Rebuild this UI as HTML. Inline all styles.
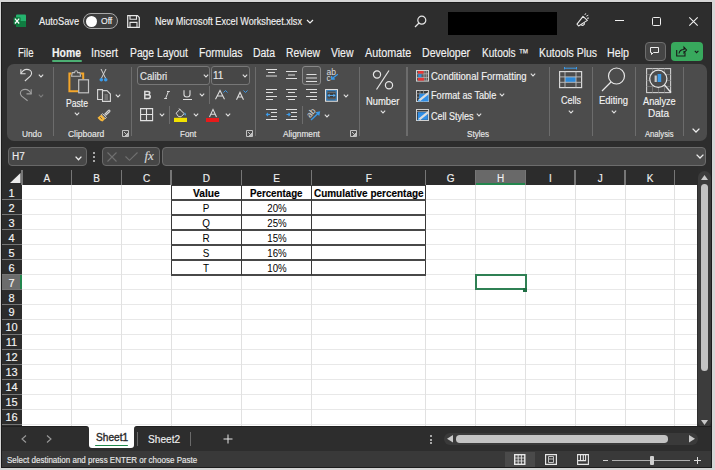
<!DOCTYPE html>
<html><head><meta charset="utf-8">
<style>
*{box-sizing:border-box}
html,body{margin:0;padding:0}
body{width:715px;height:470px;overflow:hidden;background:#d6d6d6;position:relative;font-family:"Liberation Sans",sans-serif}
.a{position:absolute}
.t{position:absolute;white-space:nowrap;line-height:1;transform-origin:0 0;color:#f2f2f2;-webkit-text-stroke:0.15px currentColor}
.k{-webkit-text-stroke:0}
svg{position:absolute;overflow:visible}
#win{position:absolute;left:1px;top:2px;width:711px;height:466px;background:#2d2d2d}
</style></head><body>
<div id="win"></div>

<!-- ===== TITLE BAR ===== -->
<svg style="left:13px;top:14px" width="14" height="14" viewBox="0 0 14 14">
  <rect x="3" y="0.6" width="10" height="12.5" rx="1" fill="#25b36e"/>
  <rect x="3" y="7" width="10" height="6.1" rx="0.5" fill="#107c41"/>
  <rect x="0.6" y="3.2" width="7" height="7.6" rx="0.8" fill="#0e7a3e"/>
  <path d="M1.9 4.6 L6.2 9.5 M6.2 4.6 L1.9 9.5" stroke="#fff" stroke-width="1.2"/>
</svg>
<div class="t" style="left:39px;top:16px;font-size:11px;transform:scaleX(0.84)">AutoSave</div>
<div class="a" style="left:83px;top:13px;width:34.5px;height:16px;border:1.6px solid #a8a8a8;border-radius:8px;background:#3d3d3d"></div>
<div class="a" style="left:86px;top:16px;width:11px;height:11px;border-radius:50%;background:#fff"></div>
<div class="t" style="left:101px;top:17px;font-size:9px;transform:scaleX(0.95)">Off</div>
<svg style="left:127px;top:15px" width="13" height="13" viewBox="0 0 13 13">
  <path d="M0.7 0.7 H10.5 L12.3 2.5 V12.3 H0.7 Z" fill="none" stroke="#e6e6e6" stroke-width="1.2"/>
  <path d="M3 0.7 V4.3 H9.5 V0.7" fill="none" stroke="#e6e6e6" stroke-width="1.1"/>
  <path d="M3 12.3 V7.4 H10 V12.3" fill="none" stroke="#e6e6e6" stroke-width="1.1"/>
</svg>
<div class="t" style="left:155px;top:16px;font-size:11px;transform:scaleX(0.83)">New Microsoft Excel Worksheet.xlsx</div>
<svg style="left:306px;top:19px" width="8" height="5" viewBox="0 0 8 5"><path d="M1 1 L4 4 L7 1" fill="none" stroke="#eee" stroke-width="1.2"/></svg>
<svg style="left:414px;top:15px" width="13" height="13" viewBox="0 0 13 13">
  <circle cx="7.8" cy="5.2" r="4" fill="none" stroke="#e6e6e6" stroke-width="1.2"/>
  <path d="M5 8 L1 12" stroke="#e6e6e6" stroke-width="1.3"/>
</svg>
<div class="a" style="left:448px;top:12px;width:109px;height:23px;background:#000"></div>
<svg style="left:574px;top:11px" width="17" height="17" viewBox="0 0 17 17">
  <path d="M3 13.2 L9 5.4 L13.4 9.4 L4.6 15 Z" fill="none" stroke="#e8e8e8" stroke-width="1.1" stroke-linejoin="round"/>
  <path d="M7.2 13.4 A1.7 1.7 0 0 0 10.2 11.8" fill="none" stroke="#e8e8e8" stroke-width="1.1"/>
  <path d="M10.8 4 L11.8 2.3 M12.3 5.2 L14.3 4.2 M13 7.3 L15 7" stroke="#e0e0e0" stroke-width="1"/>
</svg>
<div class="a" style="left:615px;top:20px;width:9px;height:1.2px;background:#f0f0f0"></div>
<div class="a" style="left:652px;top:17px;width:9px;height:9px;border:1.2px solid #f0f0f0;border-radius:1.5px"></div>
<svg style="left:689px;top:17px" width="9" height="9" viewBox="0 0 9 9"><path d="M0.3 0.3 L8.7 8.7 M8.7 0.3 L0.3 8.7" stroke="#f0f0f0" stroke-width="1.1"/></svg>

<!-- ===== TABS ===== -->
<div class="t" style="left:17.5px;top:47px;font-size:12px;transform:scaleX(0.8)">File</div>
<div class="t" style="left:52px;top:47px;font-size:12px;font-weight:bold;transform:scaleX(0.87)">Home</div>
<div class="a" style="left:52px;top:60px;width:30px;height:2px;background:#4caf73;border-radius:1px"></div>
<div class="t" style="left:91px;top:47px;font-size:12px;transform:scaleX(0.9)">Insert</div>
<div class="t" style="left:129.5px;top:47px;font-size:12px;transform:scaleX(0.86)">Page Layout</div>
<div class="t" style="left:198.5px;top:47px;font-size:12px;transform:scaleX(0.87)">Formulas</div>
<div class="t" style="left:252.5px;top:47px;font-size:12px;transform:scaleX(0.87)">Data</div>
<div class="t" style="left:286px;top:47px;font-size:12px;transform:scaleX(0.86)">Review</div>
<div class="t" style="left:331px;top:47px;font-size:12px;transform:scaleX(0.87)">View</div>
<div class="t" style="left:364.5px;top:47px;font-size:12px;transform:scaleX(0.9)">Automate</div>
<div class="t" style="left:422px;top:47px;font-size:12px;transform:scaleX(0.88)">Developer</div>
<div class="t" style="left:482px;top:47px;font-size:12px;transform:scaleX(0.84)">Kutools ™</div>
<div class="t" style="left:538.5px;top:47px;font-size:12px;transform:scaleX(0.87)">Kutools Plus</div>
<div class="t" style="left:607px;top:47px;font-size:12px;transform:scaleX(0.89)">Help</div>
<div class="a" style="left:645px;top:42px;width:21px;height:19px;background:#454545;border:1px solid #6e6e6e;border-radius:4px"></div>
<svg style="left:650px;top:47px" width="9" height="8" viewBox="0 0 9 8"><path d="M0.5 0.5 H8.5 V5.5 H3.5 L1.5 7.5 V5.5 H0.5 Z" fill="none" stroke="#eee" stroke-width="1"/></svg>
<div class="a" style="left:671px;top:42px;width:32px;height:19px;background:#38a95d;border-radius:4px"></div>
<svg style="left:676px;top:46px" width="24" height="11" viewBox="0 0 24 11">
  <path d="M0.7 4 V10 H9 V6.5" fill="none" stroke="#1a1a1a" stroke-width="1.1"/>
  <path d="M3 7.5 C3.5 4.5 5.5 3.5 8 3.5 V1.2 L10.5 4 L8 6.8 V5" fill="none" stroke="#1a1a1a" stroke-width="1.1"/>
  <path d="M18.8 4.8 L20.6 6.6 L22.4 4.8" fill="none" stroke="#1a1a1a" stroke-width="1.1"/>
</svg>

<!-- ===== RIBBON PANEL ===== -->
<div class="a" style="left:7px;top:64px;width:700px;height:76.5px;background:#4c4c4c;border-radius:7px"></div>


<!-- Undo group -->
<svg style="left:19px;top:68px" width="16" height="14" viewBox="0 0 16 14">
  <path d="M1.9 1.2 V5.8 H6.6" fill="none" stroke="#dcdcdc" stroke-width="1.1"/>
  <path d="M1.9 5.8 C3.5 2.5 6 1.4 7.7 1.4 C10.5 1.4 12.6 3.2 12.6 5.2 C12.6 6.5 12 7.3 11.3 8.2 L5.9 13" fill="none" stroke="#dcdcdc" stroke-width="1.1"/>
</svg>
<svg style="left:38px;top:74px" width="6" height="4" viewBox="0 0 6 4"><path d="M0.8 0.7 L3 2.9 L5.2 0.7" fill="none" stroke="#e0e0e0" stroke-width="1.1"/></svg>
<svg style="left:19px;top:88px" width="16" height="14" viewBox="0 0 16 14">
  <path d="M12.2 1.2 V5.9 H7.5" fill="none" stroke="#a0a0a0" stroke-width="1.1"/>
  <path d="M12.2 5.9 C10.6 2.6 8.1 1.4 6.3 1.4 C3.5 1.4 1.4 3.2 1.4 5.2 C1.4 6.5 2 7.3 2.7 8.2 L8.6 12.8" fill="none" stroke="#a0a0a0" stroke-width="1.1"/>
</svg>
<svg style="left:38px;top:94px" width="6" height="4" viewBox="0 0 6 4"><path d="M0.8 0.7 L3 2.9 L5.2 0.7" fill="none" stroke="#7c7c7c" stroke-width="1.1"/></svg>
<div class="t" style="left:22px;top:129.5px;font-size:9px;color:#e8e8e8;transform:scaleX(0.92)">Undo</div>
<div class="a" style="left:52.75px;top:67px;width:1.5px;height:69px;background:#6c6c6c"></div>

<!-- Clipboard group -->
<svg style="left:67px;top:69px" width="23" height="25" viewBox="0 0 23 25">
  <path d="M4.5 4.4 H2.4 V22.2 H11" fill="none" stroke="#f4a62a" stroke-width="2"/>
  <path d="M13.5 4.4 H16.2 V10" fill="none" stroke="#f4a62a" stroke-width="2"/>
  <path d="M4.6 7.2 L5.3 3.6 H7.6 C7.8 1.2 10.4 1.2 10.6 3.6 H12.9 L13.6 7.2 Z" fill="#4c4c4c" stroke="#bdbdbd" stroke-width="1.1"/>
  <rect x="11.7" y="10.8" width="9.8" height="13" fill="#4c4c4c" stroke="#c4c4c4" stroke-width="1.2"/>
</svg>
<div class="t" style="left:66px;top:99px;font-size:10px;transform:scaleX(0.86)">Paste</div>
<svg style="left:74px;top:112px" width="6" height="4" viewBox="0 0 6 4"><path d="M0.8 0.7 L3 2.9 L5.2 0.7" fill="none" stroke="#e0e0e0" stroke-width="1.1"/></svg>
<svg style="left:98px;top:68px" width="11" height="14" viewBox="0 0 11 14">
  <path d="M3 1 L7.6 10.3 M8 1 L3.4 10.3" stroke="#d6d6d6" stroke-width="1"/>
  <circle cx="3.3" cy="11.8" r="1.8" fill="#3b9ae8"/>
  <circle cx="7.7" cy="11.8" r="1.8" fill="#3b9ae8"/>
</svg>
<svg style="left:96.5px;top:89px" width="14" height="13" viewBox="0 0 14 13">
  <path d="M0.6 0.6 H5.5 V10.5 H0.6 Z" fill="none" stroke="#d6d6d6" stroke-width="1.1"/>
  <path d="M5.5 1.6 H10 L13.4 5 V12.4 H5.5 Z" fill="#4c4c4c" stroke="#d6d6d6" stroke-width="1.1"/>
  <path d="M7.5 6 H11 M7.5 8 H11 M7.5 10 H11" stroke="#9a9a9a" stroke-width="1"/>
</svg>
<svg style="left:115px;top:94px" width="6" height="4" viewBox="0 0 6 4"><path d="M0.8 0.7 L3 2.9 L5.2 0.7" fill="none" stroke="#e0e0e0" stroke-width="1.1"/></svg>
<svg style="left:97px;top:108.5px" width="14" height="13" viewBox="0 0 14 13">
  <path d="M7.5 5.5 L11.5 1.3 C12.3 0.5 13.5 1.7 12.7 2.5 L8.5 6.5" fill="none" stroke="#d6d6d6" stroke-width="1.1"/>
  <path d="M5.5 4.6 L9.4 8.5 L8.2 9.7 L4.3 5.8 Z" fill="#4c4c4c" stroke="#d6d6d6" stroke-width="1"/>
  <path d="M4.3 5.8 L0.5 8.8 C2 10.8 3.5 12 5.5 12.5 L8.2 9.7 Z" fill="#f6b73c"/>
  <path d="M3 8 L5.2 10.2" stroke="#474747" stroke-width="0.7"/>
</svg>
<div class="t" style="left:67.5px;top:129.5px;font-size:9px;color:#e8e8e8;transform:scaleX(0.94)">Clipboard</div>
<svg style="left:122px;top:130px" width="7" height="7" viewBox="0 0 7 7"><path d="M0.5 6.5 V0.5 H6.5 V6.5 Z M2 2 L5.5 5.5 M5.5 3 V5.5 H3" fill="none" stroke="#cfcfcf" stroke-width="0.9"/></svg>
<div class="a" style="left:130.75px;top:67px;width:1.5px;height:69px;background:#6c6c6c"></div>

<!-- Font group -->
<div class="a" style="left:137px;top:66px;width:73px;height:19px;border:1px solid #777;border-radius:3px;background:#474747"></div>
<div class="t" style="left:139.5px;top:72px;font-size:10px;color:#e8e8e8;transform:scaleX(0.96)">Calibri</div>
<svg style="left:202.5px;top:74px" width="6" height="4" viewBox="0 0 6 4"><path d="M0.8 0.7 L3 2.9 L5.2 0.7" fill="none" stroke="#e0e0e0" stroke-width="1.1"/></svg>
<div class="a" style="left:211px;top:66px;width:39px;height:19px;border:1px solid #777;border-radius:3px;background:#474747"></div>
<div class="t" style="left:213px;top:71px;font-size:10px;color:#e8e8e8">11</div>
<svg style="left:242px;top:74px" width="6" height="4" viewBox="0 0 6 4"><path d="M0.8 0.7 L3 2.9 L5.2 0.7" fill="none" stroke="#e0e0e0" stroke-width="1.1"/></svg>
<svg style="left:144px;top:90.5px" width="7" height="8" viewBox="0 0 7 8"><path d="M0.8 0.5 H3.8 C5.3 0.5 5.8 1.3 5.8 2.1 C5.8 3 5.2 3.6 4 3.8 C5.5 3.9 6.3 4.7 6.3 5.7 C6.3 6.9 5.4 7.5 4 7.5 H0.8 Z M0.8 3.8 H4" fill="none" stroke="#dcdcdc" stroke-width="1.5"/></svg>
<svg style="left:164px;top:90.5px" width="6" height="8" viewBox="0 0 6 8"><path d="M3 0.5 H5.8 M0.2 7.5 H3 M4.4 0.5 L1.6 7.5" fill="none" stroke="#dcdcdc" stroke-width="1"/></svg>
<svg style="left:183px;top:90px" width="8" height="8" viewBox="0 0 8 8"><path d="M1 0.3 V4.5 C1 6 2 7 4 7 C6 7 7 6 7 4.5 V0.3" fill="none" stroke="#dcdcdc" stroke-width="1.1"/></svg>
<div class="a" style="left:182.5px;top:99px;width:9px;height:1px;background:#dcdcdc"></div>
<svg style="left:199px;top:93px" width="6" height="4" viewBox="0 0 6 4"><path d="M0.8 0.7 L3 2.9 L5.2 0.7" fill="none" stroke="#e0e0e0" stroke-width="1.1"/></svg>
<div class="a" style="left:209px;top:86px;width:1.3px;height:18px;background:#6c6c6c"></div>
<svg style="left:214.5px;top:90px" width="10" height="9.5" viewBox="0 0 10 9.5"><path d="M0.5 9.3 L5 0.4 L9.5 9.3 M2.2 6 H7.8" fill="none" stroke="#dcdcdc" stroke-width="1.1"/></svg>
<svg style="left:222.5px;top:89.5px" width="5" height="3" viewBox="0 0 5 3"><path d="M0.5 2.5 L2.5 0.5 L4.5 2.5" fill="none" stroke="#3b9ae8" stroke-width="1"/></svg>
<svg style="left:235.5px;top:91.5px" width="8" height="8" viewBox="0 0 8 8"><path d="M0.5 7.8 L4 0.4 L7.5 7.8 M1.8 5 H6.2" fill="none" stroke="#dcdcdc" stroke-width="1.1"/></svg>
<svg style="left:242.5px;top:89.5px" width="5" height="3" viewBox="0 0 5 3"><path d="M0.5 0.5 L2.5 2.5 L4.5 0.5" fill="none" stroke="#3b9ae8" stroke-width="1"/></svg>
<svg style="left:140px;top:108px" width="14" height="14" viewBox="0 0 14 14"><path d="M0.6 0.6 H12.6 V12.6 H0.6 Z M6.5 0.6 V12.6 M0.6 6.5 H12.6" fill="none" stroke="#e2e2e2" stroke-width="1.1"/></svg>
<svg style="left:159px;top:113px" width="6" height="4" viewBox="0 0 6 4"><path d="M0.8 0.7 L3 2.9 L5.2 0.7" fill="none" stroke="#e0e0e0" stroke-width="1.1"/></svg>
<div class="a" style="left:169px;top:106px;width:1.3px;height:18px;background:#6c6c6c"></div>
<svg style="left:174px;top:108px" width="14" height="14" viewBox="0 0 14 14">
  <path d="M2.2 5.2 L5.8 1.4 L10.2 5.6 L7 8.8 L4.5 8.6 Z" fill="none" stroke="#dcdcdc" stroke-width="1"/>
  <path d="M5 0.5 L6.3 2" stroke="#dcdcdc" stroke-width="1"/>
  <path d="M10.8 4.2 C11.8 5.5 12.3 6.8 11.4 7.5 C10.5 7.6 10.2 6.6 10.8 4.2Z" fill="#4aa8f0"/>
  <rect x="0" y="9.8" width="13" height="4.2" fill="#f2e200"/>
</svg>
<svg style="left:193px;top:113px" width="6" height="4" viewBox="0 0 6 4"><path d="M0.8 0.7 L3 2.9 L5.2 0.7" fill="none" stroke="#e0e0e0" stroke-width="1.1"/></svg>
<svg style="left:208.8px;top:108.8px" width="8" height="8.2" viewBox="0 0 8 8.2"><path d="M0.5 8.1 L4 0.4 L7.5 8.1 M1.8 5.2 H6.2" fill="none" stroke="#dcdcdc" stroke-width="1.05"/></svg>
<div class="a" style="left:206px;top:118px;width:13px;height:3.5px;background:#e81a1a"></div>
<svg style="left:225px;top:113px" width="6" height="4" viewBox="0 0 6 4"><path d="M0.8 0.7 L3 2.9 L5.2 0.7" fill="none" stroke="#e0e0e0" stroke-width="1.1"/></svg>
<div class="t" style="left:179.5px;top:129.5px;font-size:9px;color:#e8e8e8;transform:scaleX(0.9)">Font</div>
<svg style="left:246px;top:130px" width="7" height="7" viewBox="0 0 7 7"><path d="M0.5 6.5 V0.5 H6.5 V6.5 Z M2 2 L5.5 5.5 M5.5 3 V5.5 H3" fill="none" stroke="#cfcfcf" stroke-width="0.9"/></svg>
<div class="a" style="left:254.75px;top:67px;width:1.5px;height:69px;background:#6c6c6c"></div>

<!-- Alignment group -->
<svg style="left:266px;top:69px" width="11" height="10" viewBox="0 0 11 10"><path d="M0 0.5 H11 M2 3.5 H9 M0 7 H11" stroke="#dedede" stroke-width="1"/></svg>
<svg style="left:286px;top:70.5px" width="11" height="10" viewBox="0 0 11 10"><path d="M0 0.5 H11 M2 4 H9 M0 7.5 H11" stroke="#dedede" stroke-width="1"/></svg>
<div class="a" style="left:302px;top:66px;width:18.5px;height:18.5px;border:1px solid #888;border-radius:3px;background:#525252"></div>
<svg style="left:305.5px;top:74px" width="11" height="10" viewBox="0 0 11 10"><path d="M0.5 0.5 H10.5 M0 4 H11 M0 7.5 H11" stroke="#dedede" stroke-width="1"/></svg>
<svg style="left:326px;top:68px" width="14" height="15" viewBox="0 0 14 15">
  <text x="0.6" y="7" font-size="8.5" fill="#dcdcdc" font-family="Liberation Sans">ab</text>
  <text x="0.6" y="13" font-size="8.5" fill="#dcdcdc" font-family="Liberation Sans">c</text>
  <path d="M11.8 6.3 L6.2 10.6 M5.6 8 V11 H8.8" fill="none" stroke="#3b9ae8" stroke-width="1.3"/>
</svg>
<svg style="left:266px;top:89px" width="11" height="11" viewBox="0 0 11 11"><path d="M0 0.5 H11 M0 3.5 H7 M0 7.5 H11 M0 10.5 H7" stroke="#dedede" stroke-width="1"/></svg>
<svg style="left:286px;top:89px" width="11" height="11" viewBox="0 0 11 11"><path d="M0 0.5 H11 M2 3.5 H9 M0 7.5 H11 M2 10.5 H9" stroke="#dedede" stroke-width="1"/></svg>
<svg style="left:306px;top:89px" width="11" height="11" viewBox="0 0 11 11"><path d="M0 0.5 H11 M4 3.5 H11 M0 7.5 H11 M4 10.5 H11" stroke="#dedede" stroke-width="1"/></svg>
<svg style="left:324.5px;top:88.5px" width="13" height="13" viewBox="0 0 13 13">
  <rect x="0.6" y="0.6" width="11.8" height="11.6" fill="#3a3a3a" stroke="#e6e6e6" stroke-width="1.1"/>
  <rect x="1.8" y="1.8" width="9.4" height="9.2" fill="none" stroke="#3b9ae8" stroke-width="1"/>
  <path d="M2.3 3.6 H10.7 M2.3 9.2 H10.7" stroke="#777" stroke-width="0.8"/>
  <path d="M4 6.4 H9" stroke="#5ab0f5" stroke-width="1"/>
  <path d="M2.4 6.4 L4.6 4.6 V8.2 Z M10.6 6.4 L8.4 4.6 V8.2 Z" fill="#5ab0f5"/>
</svg>
<svg style="left:342.8px;top:93.5px" width="6" height="4" viewBox="0 0 6 4"><path d="M0.8 0.7 L3 2.9 L5.2 0.7" fill="none" stroke="#e0e0e0" stroke-width="1.1"/></svg>
<svg style="left:266px;top:109px" width="11" height="11" viewBox="0 0 11 11"><path d="M0 0.5 H11 M5 3.5 H11 M5 7.5 H11 M0 10.5 H11" stroke="#dedede" stroke-width="1"/><path d="M4 5.5 H0.5 M2 4 L0.5 5.5 L2 7" fill="none" stroke="#3b9ae8" stroke-width="1.1"/></svg>
<svg style="left:286px;top:109px" width="11" height="11" viewBox="0 0 11 11"><path d="M0 0.5 H11 M5 3.5 H11 M5 7.5 H11 M0 10.5 H11" stroke="#dedede" stroke-width="1"/><path d="M0.5 5.5 H4 M2.5 4 L4 5.5 L2.5 7" fill="none" stroke="#3b9ae8" stroke-width="1.1"/></svg>
<div class="a" style="left:302px;top:106px;width:1.3px;height:18px;background:#6c6c6c"></div>
<svg style="left:305px;top:106px" width="18" height="16" viewBox="0 0 18 16">
  <text x="6.2" y="9.6" font-size="8.5" fill="#dcdcdc" font-family="Liberation Sans" text-anchor="middle" transform="rotate(-48 6.2 7)">ab</text>
  <path d="M6 14 L13.2 7.3" stroke="#3b9ae8" stroke-width="1.3"/>
  <path d="M15.2 5.2 L10.4 6.2 L14.2 10 Z" fill="#3b9ae8"/>
</svg>
<svg style="left:323.5px;top:113.5px" width="6" height="4" viewBox="0 0 6 4"><path d="M0.8 0.7 L3 2.9 L5.2 0.7" fill="none" stroke="#e0e0e0" stroke-width="1.1"/></svg>
<div class="t" style="left:282.5px;top:129.5px;font-size:9px;color:#e8e8e8;transform:scaleX(0.92)">Alignment</div>
<svg style="left:350px;top:130px" width="7" height="7" viewBox="0 0 7 7"><path d="M0.5 6.5 V0.5 H6.5 V6.5 Z M2 2 L5.5 5.5 M5.5 3 V5.5 H3" fill="none" stroke="#cfcfcf" stroke-width="0.9"/></svg>
<div class="a" style="left:358.75px;top:67px;width:1.5px;height:69px;background:#6c6c6c"></div>

<!-- Number group -->
<svg style="left:372px;top:70px" width="22" height="20" viewBox="0 0 22 20">
  <circle cx="5" cy="4.5" r="3.6" fill="none" stroke="#e6e6e6" stroke-width="1.2"/>
  <circle cx="17" cy="15.3" r="3.6" fill="none" stroke="#e6e6e6" stroke-width="1.2"/>
  <path d="M17 0.5 L4.5 19.5" stroke="#e6e6e6" stroke-width="1.2"/>
</svg>
<div class="t" style="left:365.5px;top:96.5px;font-size:10px;transform:scaleX(0.94)">Number</div>
<svg style="left:379.5px;top:110px" width="6" height="4" viewBox="0 0 6 4"><path d="M0.8 0.7 L3 2.9 L5.2 0.7" fill="none" stroke="#e0e0e0" stroke-width="1.1"/></svg>
<div class="a" style="left:406.25px;top:67px;width:1.5px;height:69px;background:#6c6c6c"></div>

<!-- Styles group -->
<svg style="left:416px;top:69.5px" width="13" height="12" viewBox="0 0 13 12">
  <rect x="0" y="0" width="13" height="11.6" fill="#d0d0d0"/>
  <rect x="1" y="1" width="11" height="9.6" fill="#5a5a5a"/>
  <path d="M1 3.8 H12 M1 7.5 H12 M8 1 V10.6 M10.3 1 V10.6" stroke="#b8b8b8" stroke-width="0.7"/>
  <rect x="2" y="1" width="5.6" height="2.6" fill="#e83535"/>
  <rect x="2.3" y="4.2" width="3.2" height="3" fill="#2b8fe0"/>
  <rect x="2" y="7.9" width="6" height="2.7" fill="#e83535"/>
</svg>
<div class="t" style="left:431px;top:72.4px;font-size:10px;transform:scaleX(0.95)">Conditional Formatting</div>
<svg style="left:530px;top:73px" width="6" height="4" viewBox="0 0 6 4"><path d="M0.8 0.7 L3 2.9 L5.2 0.7" fill="none" stroke="#e0e0e0" stroke-width="1.1"/></svg>
<svg style="left:416px;top:89.5px" width="13" height="12" viewBox="0 0 13 12">
  <rect x="0.5" y="0.5" width="12" height="11" fill="#3a3a3a" stroke="#cfcfcf" stroke-width="1"/>
  <path d="M0.5 3.8 H12.5 M0.5 7.2 H12.5 M4 0.5 V11.5 M7.5 0.5 V11.5" stroke="#9a9a9a" stroke-width="0.8"/>
  <path d="M3.5 3.8 H12.5 V11.5 H2.5 Z" fill="#2f8ee6"/>
  <path d="M3 10.6 L12.3 3.2" stroke="#dcdcdc" stroke-width="2.2"/>
  <path d="M1.5 11.8 L2.3 9.5 L4.2 10.6 Z" fill="#57aef5"/>
</svg>
<div class="t" style="left:431px;top:91.3px;font-size:10px;transform:scaleX(0.912)">Format as Table</div>
<svg style="left:499px;top:93px" width="6" height="4" viewBox="0 0 6 4"><path d="M0.8 0.7 L3 2.9 L5.2 0.7" fill="none" stroke="#e0e0e0" stroke-width="1.1"/></svg>
<svg style="left:416px;top:109px" width="13" height="12" viewBox="0 0 13 12">
  <rect x="0.5" y="0.5" width="12" height="11" fill="#3a3a3a" stroke="#cfcfcf" stroke-width="1"/>
  <path d="M1 2.5 H12" stroke="#9a9a9a" stroke-width="0.8"/>
  <path d="M1.8 3.2 H11.8 V10.8 H1.8 Z" fill="#2f8ee6"/>
  <path d="M3 10.6 L12.3 3.2" stroke="#dcdcdc" stroke-width="2.2"/>
  <path d="M1.5 11.8 L2.3 9.5 L4.2 10.6 Z" fill="#57aef5"/>
</svg>
<div class="t" style="left:431px;top:112px;font-size:10px;transform:scaleX(0.9)">Cell Styles</div>
<svg style="left:476px;top:113px" width="6" height="4" viewBox="0 0 6 4"><path d="M0.8 0.7 L3 2.9 L5.2 0.7" fill="none" stroke="#e0e0e0" stroke-width="1.1"/></svg>
<div class="t" style="left:467px;top:129.5px;font-size:9px;color:#e8e8e8;transform:scaleX(0.9)">Styles</div>
<div class="a" style="left:548.75px;top:67px;width:1.5px;height:69px;background:#6c6c6c"></div>

<!-- Cells -->
<svg style="left:559px;top:67px" width="24" height="22" viewBox="0 0 24 22">
  <path d="M5.5 1.2 H17.5 M5.5 0 V2.4 M17.5 0 V2.4" stroke="#3b9ae8" stroke-width="1"/>
  <rect x="6" y="9.9" width="11" height="5.4" fill="#2b88d8"/>
  <rect x="0.6" y="4.6" width="22" height="16" fill="none" stroke="#d8d8d8" stroke-width="1.2"/>
  <path d="M0.6 9.9 H22.6 M0.6 15.3 H22.6 M6 4.6 V20.6 M17 4.6 V20.6" stroke="#bdbdbd" stroke-width="0.9"/>
</svg>
<div class="t" style="left:560.5px;top:95.7px;font-size:10px;transform:scaleX(0.9)">Cells</div>
<svg style="left:567.5px;top:109.5px" width="6" height="4" viewBox="0 0 6 4"><path d="M0.8 0.7 L3 2.9 L5.2 0.7" fill="none" stroke="#e0e0e0" stroke-width="1.1"/></svg>
<div class="a" style="left:591.75px;top:67px;width:1.5px;height:69px;background:#6c6c6c"></div>

<!-- Editing -->
<svg style="left:601px;top:67px" width="25" height="25" viewBox="0 0 25 25">
  <circle cx="15.5" cy="9" r="8" fill="none" stroke="#e6e6e6" stroke-width="1.2"/>
  <path d="M10 15 L1 24" stroke="#e6e6e6" stroke-width="1.3"/>
</svg>
<div class="t" style="left:598.5px;top:95.7px;font-size:10px;transform:scaleX(0.95)">Editing</div>
<svg style="left:610.5px;top:109.5px" width="6" height="4" viewBox="0 0 6 4"><path d="M0.8 0.7 L3 2.9 L5.2 0.7" fill="none" stroke="#e0e0e0" stroke-width="1.1"/></svg>
<div class="a" style="left:634.75px;top:67px;width:1.5px;height:69px;background:#6c6c6c"></div>

<!-- Analyze Data -->
<svg style="left:646px;top:68px" width="26" height="26" viewBox="0 0 26 26">
  <rect x="0.6" y="0.6" width="24" height="24" fill="none" stroke="#cfcfcf" stroke-width="1.1"/>
  <path d="M0.6 6.5 H24.6 M0.6 12.5 H24.6 M0.6 18.5 H24.6 M6.5 0.6 V24.6 M12.5 0.6 V24.6 M18.5 0.6 V24.6" stroke="#7a7a7a" stroke-width="0.8"/>
  <circle cx="12.3" cy="10.8" r="8.6" fill="#4c4c4c" stroke="#e6e6e6" stroke-width="1.2"/>
  <rect x="8.6" y="7.5" width="2.2" height="6.5" fill="#c8c8c8"/>
  <rect x="11.6" y="6" width="3.6" height="8" fill="#3b9ae8"/>
  <path d="M18.5 17 L25 24.5" stroke="#e6e6e6" stroke-width="1.3"/>
</svg>
<div class="t" style="left:642.5px;top:97px;font-size:10px;transform:scaleX(0.92)">Analyze</div>
<div class="t" style="left:648px;top:109px;font-size:10px;transform:scaleX(1.0)">Data</div>
<div class="t" style="left:645px;top:129.5px;font-size:9px;color:#e8e8e8;transform:scaleX(0.85)">Analysis</div>
<div class="a" style="left:682.75px;top:67px;width:1.5px;height:69px;background:#6c6c6c"></div>
<svg style="left:691.5px;top:127.5px" width="8" height="5" viewBox="0 0 8 5"><path d="M0.6 0.6 L4 4 L7.4 0.6" fill="none" stroke="#eee" stroke-width="1.3"/></svg>


<!-- ===== FORMULA BAR ===== -->
<div class="a" style="left:7.5px;top:147px;width:79.5px;height:19px;border:1px solid #686868;border-radius:4px;background:#474747"></div>
<div class="t" style="left:12px;top:151.5px;font-size:10px;color:#ececec">H7</div>
<svg style="left:75px;top:155.5px" width="7" height="5" viewBox="0 0 7 5"><path d="M0.6 0.6 L3.5 3.8 L6.4 0.6" fill="none" stroke="#eee" stroke-width="1.3"/></svg>
<div class="a" style="left:93.3px;top:151.5px;width:2px;height:2px;background:#cfcfcf;border-radius:1px"></div>
<div class="a" style="left:93.3px;top:155.5px;width:2px;height:2px;background:#cfcfcf;border-radius:1px"></div>
<div class="a" style="left:93.3px;top:159.5px;width:2px;height:2px;background:#cfcfcf;border-radius:1px"></div>
<div class="a" style="left:102px;top:147px;width:57.5px;height:19px;border:1px solid #6a6a6a;border-radius:4px;background:#464646"></div>
<svg style="left:107px;top:151.5px" width="10" height="10" viewBox="0 0 10 10"><path d="M0.5 0.5 L9.5 9.5 M9.5 0.5 L0.5 9.5" stroke="#707070" stroke-width="1.1"/></svg>
<svg style="left:124.5px;top:152px" width="13" height="9" viewBox="0 0 13 9"><path d="M0.5 4.5 L4.5 8.3 L12.5 0.5" fill="none" stroke="#707070" stroke-width="1.1"/></svg>
<div class="t" style="left:144.5px;top:149px;font-size:13px;font-style:italic;color:#d8d8d8;font-family:'Liberation Serif'">fx</div>
<div class="a" style="left:162px;top:147px;width:544px;height:19px;border:1px solid #6c6c6c;border-radius:4px;background:#4c4c4c"></div>
<svg style="left:696px;top:154px" width="8" height="5" viewBox="0 0 8 5"><path d="M0.6 0.6 L4 4 L7.4 0.6" fill="none" stroke="#eee" stroke-width="1.3"/></svg>

<div class="a" style="left:22px;top:185px;width:674.5px;height:241px;background:#fff;overflow:hidden">
<div class="a" style="left:0;top:14px;width:680px;height:1px;background:#e8e8e8"></div>
<div class="a" style="left:0;top:29px;width:680px;height:1px;background:#e8e8e8"></div>
<div class="a" style="left:0;top:44px;width:680px;height:1px;background:#e8e8e8"></div>
<div class="a" style="left:0;top:59px;width:680px;height:1px;background:#e8e8e8"></div>
<div class="a" style="left:0;top:74px;width:680px;height:1px;background:#e8e8e8"></div>
<div class="a" style="left:0;top:89px;width:680px;height:1px;background:#e8e8e8"></div>
<div class="a" style="left:0;top:104px;width:680px;height:1px;background:#e8e8e8"></div>
<div class="a" style="left:0;top:119px;width:680px;height:1px;background:#e8e8e8"></div>
<div class="a" style="left:0;top:134px;width:680px;height:1px;background:#e8e8e8"></div>
<div class="a" style="left:0;top:149px;width:680px;height:1px;background:#e8e8e8"></div>
<div class="a" style="left:0;top:164px;width:680px;height:1px;background:#e8e8e8"></div>
<div class="a" style="left:0;top:179px;width:680px;height:1px;background:#e8e8e8"></div>
<div class="a" style="left:0;top:194px;width:680px;height:1px;background:#e8e8e8"></div>
<div class="a" style="left:0;top:209px;width:680px;height:1px;background:#e8e8e8"></div>
<div class="a" style="left:0;top:224px;width:680px;height:1px;background:#e8e8e8"></div>
<div class="a" style="left:0;top:239px;width:680px;height:1px;background:#e8e8e8"></div>
<div class="a" style="left:49.3px;top:0;width:1px;height:245px;background:#e1e1e1"></div>
<div class="a" style="left:99.1px;top:0;width:1px;height:245px;background:#e1e1e1"></div>
<div class="a" style="left:148.9px;top:0;width:1px;height:245px;background:#e1e1e1"></div>
<div class="a" style="left:219.0px;top:0;width:1px;height:245px;background:#e1e1e1"></div>
<div class="a" style="left:289.2px;top:0;width:1px;height:245px;background:#e1e1e1"></div>
<div class="a" style="left:403.4px;top:0;width:1px;height:245px;background:#e1e1e1"></div>
<div class="a" style="left:453.0px;top:0;width:1px;height:245px;background:#e1e1e1"></div>
<div class="a" style="left:503.1px;top:0;width:1px;height:245px;background:#e1e1e1"></div>
<div class="a" style="left:552.8px;top:0;width:1px;height:245px;background:#e1e1e1"></div>
<div class="a" style="left:602.8px;top:0;width:1px;height:245px;background:#e1e1e1"></div>
<div class="a" style="left:652.3px;top:0;width:1px;height:245px;background:#e1e1e1"></div>
<div class="a" style="left:701.5px;top:0;width:1px;height:245px;background:#e1e1e1"></div>
</div>
<div class="a" style="left:1px;top:166px;width:697px;height:19px;background:#2c2c2c"></div>
<div class="a" style="left:475.5px;top:170px;width:50px;height:15px;background:#696969"></div>
<div class="a" style="left:475.5px;top:183px;width:50px;height:2px;background:#23854d"></div>
<div class="a" style="left:21.0px;top:170px;width:1.5px;height:15px;background:#767676"></div>
<div class="t" style="left:26.9px;width:40px;text-align:center;top:174px;font-size:10px;color:#f0f0f0">A</div>
<div class="a" style="left:70.8px;top:170px;width:1.5px;height:15px;background:#767676"></div>
<div class="t" style="left:76.7px;width:40px;text-align:center;top:174px;font-size:10px;color:#f0f0f0">B</div>
<div class="a" style="left:120.6px;top:170px;width:1.5px;height:15px;background:#767676"></div>
<div class="t" style="left:126.5px;width:40px;text-align:center;top:174px;font-size:10px;color:#f0f0f0">C</div>
<div class="a" style="left:170.4px;top:170px;width:1.5px;height:15px;background:#767676"></div>
<div class="t" style="left:186.4px;width:40px;text-align:center;top:174px;font-size:10px;color:#f0f0f0">D</div>
<div class="a" style="left:240.5px;top:170px;width:1.5px;height:15px;background:#767676"></div>
<div class="t" style="left:256.6px;width:40px;text-align:center;top:174px;font-size:10px;color:#f0f0f0">E</div>
<div class="a" style="left:310.7px;top:170px;width:1.5px;height:15px;background:#767676"></div>
<div class="t" style="left:348.8px;width:40px;text-align:center;top:174px;font-size:10px;color:#f0f0f0">F</div>
<div class="a" style="left:424.9px;top:170px;width:1.5px;height:15px;background:#767676"></div>
<div class="t" style="left:430.7px;width:40px;text-align:center;top:174px;font-size:10px;color:#f0f0f0">G</div>
<div class="a" style="left:474.5px;top:170px;width:1.5px;height:15px;background:#767676"></div>
<div class="t" style="left:480.6px;width:40px;text-align:center;top:174px;font-size:10px;color:#f0f0f0">H</div>
<div class="a" style="left:524.6px;top:170px;width:1.5px;height:15px;background:#767676"></div>
<div class="t" style="left:530.5px;width:40px;text-align:center;top:174px;font-size:10px;color:#f0f0f0">I</div>
<div class="a" style="left:574.3px;top:170px;width:1.5px;height:15px;background:#767676"></div>
<div class="t" style="left:580.3px;width:40px;text-align:center;top:174px;font-size:10px;color:#f0f0f0">J</div>
<div class="a" style="left:624.3px;top:170px;width:1.5px;height:15px;background:#767676"></div>
<div class="t" style="left:630.0px;width:40px;text-align:center;top:174px;font-size:10px;color:#f0f0f0">K</div>
<div class="a" style="left:673.8px;top:170px;width:1.5px;height:15px;background:#767676"></div>
<svg style="left:10px;top:173px" width="11" height="10" viewBox="0 0 11 10"><path d="M10.5 0 V10 H0 Z" fill="#ececec"/></svg>
<div class="a" style="left:1px;top:185px;width:21px;height:241px;background:#2c2c2c"></div>
<div class="a" style="left:1px;top:275px;width:21px;height:15px;background:#6c6c6c"></div>
<div class="a" style="left:20px;top:274.5px;width:2px;height:15.5px;background:#23854d"></div>
<div class="a" style="left:1px;top:198.5px;width:21px;height:1.5px;background:#767676"></div>
<div class="t" style="left:1px;width:21px;text-align:center;top:188.00px;font-size:11px;color:#f4f4f4">1</div>
<div class="a" style="left:1px;top:213.5px;width:21px;height:1.5px;background:#767676"></div>
<div class="t" style="left:1px;width:21px;text-align:center;top:202.93px;font-size:11px;color:#f4f4f4">2</div>
<div class="a" style="left:1px;top:228.5px;width:21px;height:1.5px;background:#767676"></div>
<div class="t" style="left:1px;width:21px;text-align:center;top:217.86px;font-size:11px;color:#f4f4f4">3</div>
<div class="a" style="left:1px;top:243.5px;width:21px;height:1.5px;background:#767676"></div>
<div class="t" style="left:1px;width:21px;text-align:center;top:232.79px;font-size:11px;color:#f4f4f4">4</div>
<div class="a" style="left:1px;top:258.5px;width:21px;height:1.5px;background:#767676"></div>
<div class="t" style="left:1px;width:21px;text-align:center;top:247.72px;font-size:11px;color:#f4f4f4">5</div>
<div class="a" style="left:1px;top:273.5px;width:21px;height:1.5px;background:#767676"></div>
<div class="t" style="left:1px;width:21px;text-align:center;top:262.65px;font-size:11px;color:#f4f4f4">6</div>
<div class="a" style="left:1px;top:288.5px;width:21px;height:1.5px;background:#767676"></div>
<div class="t" style="left:1px;width:21px;text-align:center;top:277.58px;font-size:11px;color:#f4f4f4">7</div>
<div class="a" style="left:1px;top:303.5px;width:21px;height:1.5px;background:#767676"></div>
<div class="t" style="left:1px;width:21px;text-align:center;top:292.51px;font-size:11px;color:#f4f4f4">8</div>
<div class="a" style="left:1px;top:318.5px;width:21px;height:1.5px;background:#767676"></div>
<div class="t" style="left:1px;width:21px;text-align:center;top:307.44px;font-size:11px;color:#f4f4f4">9</div>
<div class="a" style="left:1px;top:333.5px;width:21px;height:1.5px;background:#767676"></div>
<div class="t" style="left:1px;width:21px;text-align:center;top:322.37px;font-size:11px;color:#f4f4f4">10</div>
<div class="a" style="left:1px;top:348.5px;width:21px;height:1.5px;background:#767676"></div>
<div class="t" style="left:1px;width:21px;text-align:center;top:337.30px;font-size:11px;color:#f4f4f4">11</div>
<div class="a" style="left:1px;top:363.5px;width:21px;height:1.5px;background:#767676"></div>
<div class="t" style="left:1px;width:21px;text-align:center;top:352.23px;font-size:11px;color:#f4f4f4">12</div>
<div class="a" style="left:1px;top:378.5px;width:21px;height:1.5px;background:#767676"></div>
<div class="t" style="left:1px;width:21px;text-align:center;top:367.16px;font-size:11px;color:#f4f4f4">13</div>
<div class="a" style="left:1px;top:393.5px;width:21px;height:1.5px;background:#767676"></div>
<div class="t" style="left:1px;width:21px;text-align:center;top:382.09px;font-size:11px;color:#f4f4f4">14</div>
<div class="a" style="left:1px;top:408.5px;width:21px;height:1.5px;background:#767676"></div>
<div class="t" style="left:1px;width:21px;text-align:center;top:397.02px;font-size:11px;color:#f4f4f4">15</div>
<div class="a" style="left:1px;top:423.5px;width:21px;height:1.5px;background:#767676"></div>
<div class="t" style="left:1px;width:21px;text-align:center;top:411.95px;font-size:11px;color:#f4f4f4">16</div>
<div class="a" style="left:171px;top:184.5px;width:255px;height:90.5px;border:1px solid #3a3a3a;border-bottom:0"></div>
<div class="a" style="left:171px;top:199.3px;width:255px;height:1.25px;background:#484848"></div>
<div class="a" style="left:171px;top:214.3px;width:255px;height:1.25px;background:#484848"></div>
<div class="a" style="left:171px;top:229.3px;width:255px;height:1.25px;background:#484848"></div>
<div class="a" style="left:171px;top:244.3px;width:255px;height:1.25px;background:#484848"></div>
<div class="a" style="left:171px;top:259.3px;width:255px;height:1.25px;background:#484848"></div>
<div class="a" style="left:171px;top:274.3px;width:255px;height:1.25px;background:#484848"></div>
<div class="a" style="left:241px;top:184.5px;width:1px;height:90.5px;background:#3a3a3a"></div>
<div class="a" style="left:311.2px;top:184.5px;width:1px;height:90.5px;background:#3a3a3a"></div>
<div class="t" style="left:192.6px;top:187.5px;font-size:11px;color:#000;font-weight:bold;transform:scaleX(0.93)">Value</div>
<div class="t" style="left:250.3px;top:187.5px;font-size:11px;color:#000;font-weight:bold;transform:scaleX(0.885)">Percentage</div>
<div class="t" style="left:313.5px;top:187.5px;font-size:11px;color:#000;font-weight:bold;transform:scaleX(0.905)">Cumulative percentage</div>
<div class="t k" style="left:171px;width:70px;text-align:center;top:202.5px;font-size:11px;color:#000;transform:scaleX(0.9);transform-origin:35px 0">P</div>
<div class="t k" style="left:241.5px;width:70px;text-align:center;top:202.5px;font-size:11px;color:#000;transform:scaleX(0.88);transform-origin:35px 0">20%</div>
<div class="t k" style="left:171px;width:70px;text-align:center;top:217.5px;font-size:11px;color:#000;transform:scaleX(0.9);transform-origin:35px 0">Q</div>
<div class="t k" style="left:241.5px;width:70px;text-align:center;top:217.5px;font-size:11px;color:#000;transform:scaleX(0.88);transform-origin:35px 0">25%</div>
<div class="t k" style="left:171px;width:70px;text-align:center;top:232.5px;font-size:11px;color:#000;transform:scaleX(0.9);transform-origin:35px 0">R</div>
<div class="t k" style="left:241.5px;width:70px;text-align:center;top:232.5px;font-size:11px;color:#000;transform:scaleX(0.88);transform-origin:35px 0">15%</div>
<div class="t k" style="left:171px;width:70px;text-align:center;top:247.5px;font-size:11px;color:#000;transform:scaleX(0.9);transform-origin:35px 0">S</div>
<div class="t k" style="left:241.5px;width:70px;text-align:center;top:247.5px;font-size:11px;color:#000;transform:scaleX(0.88);transform-origin:35px 0">16%</div>
<div class="t k" style="left:171px;width:70px;text-align:center;top:262.5px;font-size:11px;color:#000;transform:scaleX(0.9);transform-origin:35px 0">T</div>
<div class="t k" style="left:241.5px;width:70px;text-align:center;top:262.5px;font-size:11px;color:#000;transform:scaleX(0.88);transform-origin:35px 0">10%</div>
<div class="a" style="left:474.5px;top:273.6px;width:52px;height:16.8px;border:2px solid #2f8054"></div>
<div class="a" style="left:523.3px;top:287.6px;width:4px;height:4px;background:#1f6e43"></div>

<div class="a" style="left:698px;top:171px;width:13px;height:257px;background:#3c3c3c;border-radius:6.5px"></div>
<svg style="left:701px;top:174.5px" width="7" height="5" viewBox="0 0 7 5"><path d="M3.5 0 L7 5 H0 Z" fill="#c8c8c8"/></svg>
<div class="a" style="left:701px;top:183.5px;width:7px;height:187px;background:#c3c3c3;border-radius:3.5px"></div>
<svg style="left:701px;top:419.5px" width="7" height="5" viewBox="0 0 7 5"><path d="M0 0 H7 L3.5 5 Z" fill="#c8c8c8"/></svg>

<!-- ===== SHEET TABS ===== -->
<div class="a" style="left:80px;top:425px;width:65px;height:7px;background:#fff"></div>
<div class="a" style="left:1px;top:426.3px;width:88px;height:24.7px;background:#2d2d2d;border-top:1.5px solid #202020;border-top-right-radius:3px"></div>
<div class="a" style="left:134px;top:426.3px;width:578px;height:24.7px;background:#2d2d2d;border-top:1.5px solid #202020;border-top-left-radius:3px"></div>
<svg style="left:21px;top:434.5px" width="6" height="8" viewBox="0 0 6 8"><path d="M5 0.5 L1 4 L5 7.5" fill="none" stroke="#9a9a9a" stroke-width="1.1"/></svg>
<svg style="left:46px;top:434.5px" width="6" height="8" viewBox="0 0 6 8"><path d="M1 0.5 L5 4 L1 7.5" fill="none" stroke="#9a9a9a" stroke-width="1.1"/></svg>
<div class="a" style="left:89px;top:425px;width:45px;height:23.3px;background:#fff;border-radius:0 0 3px 3px"></div>
<div class="t" style="left:95.5px;top:431.5px;font-size:11px;color:#2a2a2a;transform:scaleX(0.92);-webkit-text-stroke:0.4px #2a2a2a">Sheet1</div>
<div class="a" style="left:95.2px;top:444.5px;width:33px;height:1.7px;background:#1f8a4c;border-radius:1px"></div>
<div class="a" style="left:137px;top:431.5px;width:1px;height:14.5px;background:#6a6a6a"></div>
<div class="t" style="left:147.5px;top:434px;font-size:11px;color:#f0f0f0;transform:scaleX(0.92)">Sheet2</div>
<div class="a" style="left:190px;top:431.5px;width:1px;height:14.5px;background:#6a6a6a"></div>
<svg style="left:222.5px;top:433.5px" width="10" height="10" viewBox="0 0 10 10"><path d="M5 0.5 V9.5 M0.5 5 H9.5" stroke="#e6e6e6" stroke-width="1"/></svg>
<div class="a" style="left:430px;top:435px;width:2px;height:2px;background:#cfcfcf;border-radius:1px"></div>
<div class="a" style="left:430px;top:438.5px;width:2px;height:2px;background:#cfcfcf;border-radius:1px"></div>
<div class="a" style="left:430px;top:442px;width:2px;height:2px;background:#cfcfcf;border-radius:1px"></div>
<div class="a" style="left:443.5px;top:432.5px;width:254px;height:12px;background:#3a3a3a;border-radius:6px"></div>
<svg style="left:447px;top:435px" width="6" height="7.5" viewBox="0 0 6 7.5"><path d="M0 3.75 L6 0 V7.5 Z" fill="#c8c8c8"/></svg>
<div class="a" style="left:456px;top:435px;width:211.5px;height:7.5px;background:#c3c3c3;border-radius:3.75px"></div>
<svg style="left:688.5px;top:435px" width="6" height="7.5" viewBox="0 0 6 7.5"><path d="M6 3.75 L0 0 V7.5 Z" fill="#c8c8c8"/></svg>

<!-- ===== STATUS BAR ===== -->
<div class="a" style="left:1px;top:451px;width:711px;height:17px;background:#393939"></div>
<div class="t" style="left:7px;top:456px;font-size:9px;color:#e8e8e8;transform:scaleX(0.89)">Select destination and press ENTER or choose Paste</div>
<div class="a" style="left:505px;top:452px;width:30px;height:16px;background:#4a4a4a"></div>
<svg style="left:514px;top:454px" width="11.5" height="11" viewBox="0 0 11.5 11"><rect x="0" y="0" width="11.5" height="11" fill="#e8e8e8"/><rect x="1.4" y="1.4" width="2.3" height="2.2" fill="#4a4a4a"/><rect x="4.6" y="1.4" width="2.3" height="2.2" fill="#4a4a4a"/><rect x="7.8" y="1.4" width="2.3" height="2.2" fill="#4a4a4a"/><rect x="1.4" y="4.4" width="2.3" height="2.2" fill="#4a4a4a"/><rect x="4.6" y="4.4" width="2.3" height="2.2" fill="#4a4a4a"/><rect x="7.8" y="4.4" width="2.3" height="2.2" fill="#4a4a4a"/><rect x="1.4" y="7.4" width="2.3" height="2.2" fill="#4a4a4a"/><rect x="4.6" y="7.4" width="2.3" height="2.2" fill="#4a4a4a"/><rect x="7.8" y="7.4" width="2.3" height="2.2" fill="#4a4a4a"/></svg>
<svg style="left:545px;top:454px" width="12" height="11" viewBox="0 0 12 11"><path d="M0.6 0.6 H11.4 V10.4 H0.6 Z" fill="none" stroke="#e6e6e6" stroke-width="1.2"/><path d="M3.5 2.5 H8.5 V8.5 H3.5 Z M3.5 5 H8.5" fill="none" stroke="#cfcfcf" stroke-width="0.9"/></svg>
<svg style="left:577px;top:454px" width="12" height="11" viewBox="0 0 12 11"><path d="M0.6 0.6 H11.4 V10.4 H0.6 Z M3.5 0.6 V6.6 M6.3 0.6 V6.6 M0.6 6.6 H8.6 V0.6" fill="none" stroke="#e6e6e6" stroke-width="1.1"/></svg>
<div class="a" style="left:602.5px;top:459.5px;width:5.5px;height:1px;background:#cfcfcf"></div>
<div class="a" style="left:612px;top:460px;width:78px;height:1px;background:#b0b0b0"></div>
<div class="a" style="left:649.5px;top:456px;width:4px;height:9px;background:#cfcfcf;border-radius:1px"></div>
<svg style="left:694px;top:456.5px" width="7" height="7" viewBox="0 0 7 7"><path d="M3.5 0 V7 M0 3.5 H7" stroke="#dedede" stroke-width="1"/></svg>

<div class="a" style="left:1px;top:2px;width:711px;height:466px;border:1px solid #1c1c1c;pointer-events:none"></div>
</body></html>
